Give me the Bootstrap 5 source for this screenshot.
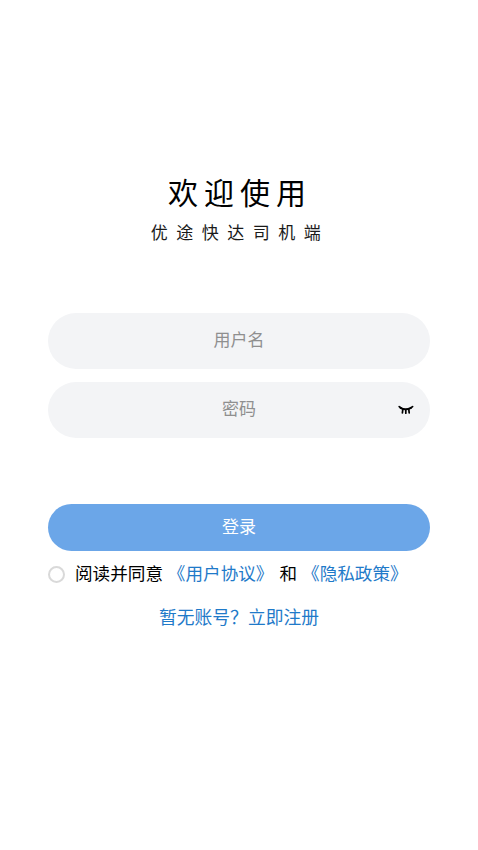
<!DOCTYPE html>
<html lang="zh-CN">
<head>
<meta charset="utf-8">
<title>优途快达司机端</title>
<meta name="viewport" content="width=device-width, initial-scale=1">
<link rel="stylesheet" href="https://cdn.jsdelivr.net/npm/bootstrap@5.3.0/dist/css/bootstrap.min.css">
<style>
body { font-family: "Liberation Sans", "Noto Sans CJK SC", sans-serif; background: #fff; color: #000; min-height: 850px; }
.login-wrap { padding: 175px 48px 0; }
.hello { font-size: 30px; line-height: 38px; letter-spacing: 6px; font-weight: 400; margin: 0; padding-left: 2px; }
.sub-hello { font-size: 17px; line-height: 24px; letter-spacing: 8.5px; margin: 9px 0 0; padding-left: 2px; color: #1a1a1a; }
.pill-input { height: 56px; border: 0; border-radius: 28px; background: #f3f4f6; text-align: center; font-size: 17px; color: #333; padding: 0 48px; }
.pill-input::placeholder { color: #8f8f8f; opacity: 1; }
.pill-input:focus { background: #f3f4f6; box-shadow: none; }
.form-area { margin-top: 67px; gap: 13px; }
.eye-btn { right: 15px; top: 23px; width: 18px; height: 10px; line-height: 0; }
.login-btn { height: 47px; margin-top: 66px; border: 0; border-radius: 24px; background: #6ba6e8; color: #fff; font-size: 17px; padding: 0; }
.login-btn:hover, .login-btn:active { background: #6ba6e8 !important; color: #fff !important; }
.agree-row { margin-top: 11px; font-size: 17.6px; line-height: 24px; gap: 10px; white-space: nowrap; }
.agree-ring { width: 17px; height: 17px; border: 2px solid #d9d9d9; border-radius: 50%; flex: none; margin-top: 4px; background: #fff; }
.blue-link { color: #1f7ac9; text-decoration: none; }
.gap-he { margin: 0 5px 0 6px; }
.reg-row { margin-top: 20px; font-size: 17.8px; line-height: 24px; }
</style>
</head>
<body>
<main class="login-wrap">
  <div class="text-center">
    <h1 class="hello">欢迎使用</h1>
    <p class="sub-hello">优途快达司机端</p>
  </div>
  <form class="form-area d-flex flex-column">
    <input class="form-control pill-input" type="text" placeholder="用户名">
    <div class="position-relative">
      <input class="form-control pill-input" type="password" placeholder="密码">
      <span class="eye-btn position-absolute">
        <svg width="18" height="10" viewBox="0 0 18 10" fill="none" stroke="#000" stroke-linecap="round">
          <path d="M3.5 2.8C6.5 4.6 10.5 4.6 14 2.8" stroke-width="2"/>
          <path d="M2.2 1.6 4 3M15.6 1.6 13.6 3M5.8 4.4 5.4 7.8M8.8 4.8V8.2M11.8 4.4 12.2 7.8" stroke-width="1.7"/>
        </svg>
      </span>
    </div>
  </form>
  <button type="button" class="btn login-btn w-100 d-block">登录</button>
  <div class="agree-row d-flex align-items-start">
    <span class="agree-ring"></span>
    <span>阅读并同意 <a class="blue-link" href="#">《用户协议》</a><span class="gap-he">和</span><a class="blue-link" href="#">《隐私政策》</a></span>
  </div>
  <div class="reg-row text-center"><a class="blue-link" href="#">暂无账号？立即注册</a></div>
</main>
<script src="https://cdn.jsdelivr.net/npm/bootstrap@5.3.0/dist/js/bootstrap.bundle.min.js"></script>
</body>
</html>
